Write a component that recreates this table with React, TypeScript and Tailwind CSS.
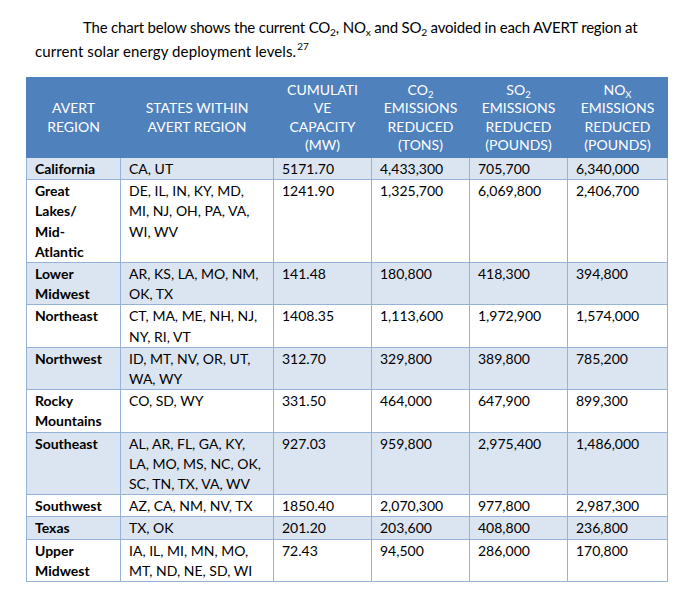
import React from "react";

type Row = {
  r: string[];
  s: string[];
  c: string;
  co2: string;
  so2: string;
  nox: string;
};

const rows: Row[] = [
  { r: ["California"], s: ["CA, UT"], c: "5171.70", co2: "4,433,300", so2: "705,700", nox: "6,340,000" },
  { r: ["Great", "Lakes/", "Mid-", "Atlantic"], s: ["DE, IL, IN, KY, MD,", "MI, NJ, OH, PA, VA,", "WI, WV"], c: "1241.90", co2: "1,325,700", so2: "6,069,800", nox: "2,406,700" },
  { r: ["Lower", "Midwest"], s: ["AR, KS, LA, MO, NM,", "OK, TX"], c: "141.48", co2: "180,800", so2: "418,300", nox: "394,800" },
  { r: ["Northeast"], s: ["CT, MA, ME, NH, NJ,", "NY, RI, VT"], c: "1408.35", co2: "1,113,600", so2: "1,972,900", nox: "1,574,000" },
  { r: ["Northwest"], s: ["ID, MT, NV, OR, UT,", "WA, WY"], c: "312.70", co2: "329,800", so2: "389,800", nox: "785,200" },
  { r: ["Rocky", "Mountains"], s: ["CO, SD, WY"], c: "331.50", co2: "464,000", so2: "647,900", nox: "899,300" },
  { r: ["Southeast"], s: ["AL, AR, FL, GA, KY,", "LA, MO, MS, NC, OK,", "SC, TN, TX, VA, WV"], c: "927.03", co2: "959,800", so2: "2,975,400", nox: "1,486,000" },
  { r: ["Southwest"], s: ["AZ, CA, NM, NV, TX"], c: "1850.40", co2: "2,070,300", so2: "977,800", nox: "2,987,300" },
  { r: ["Texas"], s: ["TX, OK"], c: "201.20", co2: "203,600", so2: "408,800", nox: "236,800" },
  { r: ["Upper", "Midwest"], s: ["IA, IL, MI, MN, MO,", "MT, ND, NE, SD, WI"], c: "72.43", co2: "94,500", so2: "286,000", nox: "170,800" },
];

const Sub = ({ children }: { children: React.ReactNode }) => (
  <span className="text-[0.68em] leading-none align-[-0.3em]">{children}</span>
);

const Lines = ({ lines }: { lines: string[] }) => (
  <>
    {lines.map((l, i) => (
      <div key={i} className="whitespace-nowrap">
        {l}
      </div>
    ))}
  </>
);

export default function App() {
  const td = "border border-[#95b3d7] pl-2 pr-1 pt-px pb-0 align-top leading-[20.2px]";
  const th = "font-normal text-center align-middle leading-[18.5px] border border-[#4f81bd]";
  return (
    <div className="w-[682px] h-[603px] bg-white text-black" style={{ fontFamily: "Lato, 'Noto Sans', sans-serif" }}>
      <p className="pl-[35px] pt-[15px] text-[15px] leading-[24px]">
        <span className="pl-[48px] tracking-[-0.2px]">
          The chart below shows the current CO<Sub>2</Sub>, NO<Sub>x</Sub> and SO<Sub>2</Sub> avoided in each AVERT region at
        </span>
        <br />
        <span className="tracking-[0.1px]">current solar energy deployment levels.</span>
        <span className="text-[10px] leading-none align-[0.7em] pl-px">27</span>
      </p>
      <div className="pl-[26px] pt-[14px]">
        <table className="table-fixed border-collapse w-[641px] text-[14px]">
          <colgroup>
            <col className="w-[94px]" />
            <col className="w-[153px]" />
            <col className="w-[98px]" />
            <col className="w-[98px]" />
            <col className="w-[98px]" />
            <col className="w-[100px]" />
          </colgroup>
          <thead>
            <tr className="bg-[#4f81bd] text-white h-[80px]">
              <th className={th}>
                AVERT<br />REGION
              </th>
              <th className={th}>
                STATES WITHIN<br />AVERT REGION
              </th>
              <th className={th}>
                CUMULATI<br />VE<br />CAPACITY<br />(MW)
              </th>
              <th className={th}>
                CO<Sub>2</Sub><br />EMISSIONS<br />REDUCED<br />(TONS)
              </th>
              <th className={th}>
                SO<Sub>2</Sub><br />EMISSIONS<br />REDUCED<br />(POUNDS)
              </th>
              <th className={th}>
                NO<Sub>X</Sub><br />EMISSIONS<br />REDUCED<br />(POUNDS)
              </th>
            </tr>
          </thead>
          <tbody>
            {rows.map((row, i) => (
              <tr key={i} className={i % 2 === 0 ? "bg-[#dbe5f1]" : "bg-white"}>
                <td className={`${td} font-bold`}>
                  <Lines lines={row.r} />
                </td>
                <td className={td}>
                  <Lines lines={row.s} />
                </td>
                <td className={td}>{row.c}</td>
                <td className={td}>{row.co2}</td>
                <td className={td}>{row.so2}</td>
                <td className={td}>{row.nox}</td>
              </tr>
            ))}
          </tbody>
        </table>
      </div>
    </div>
  );
}
